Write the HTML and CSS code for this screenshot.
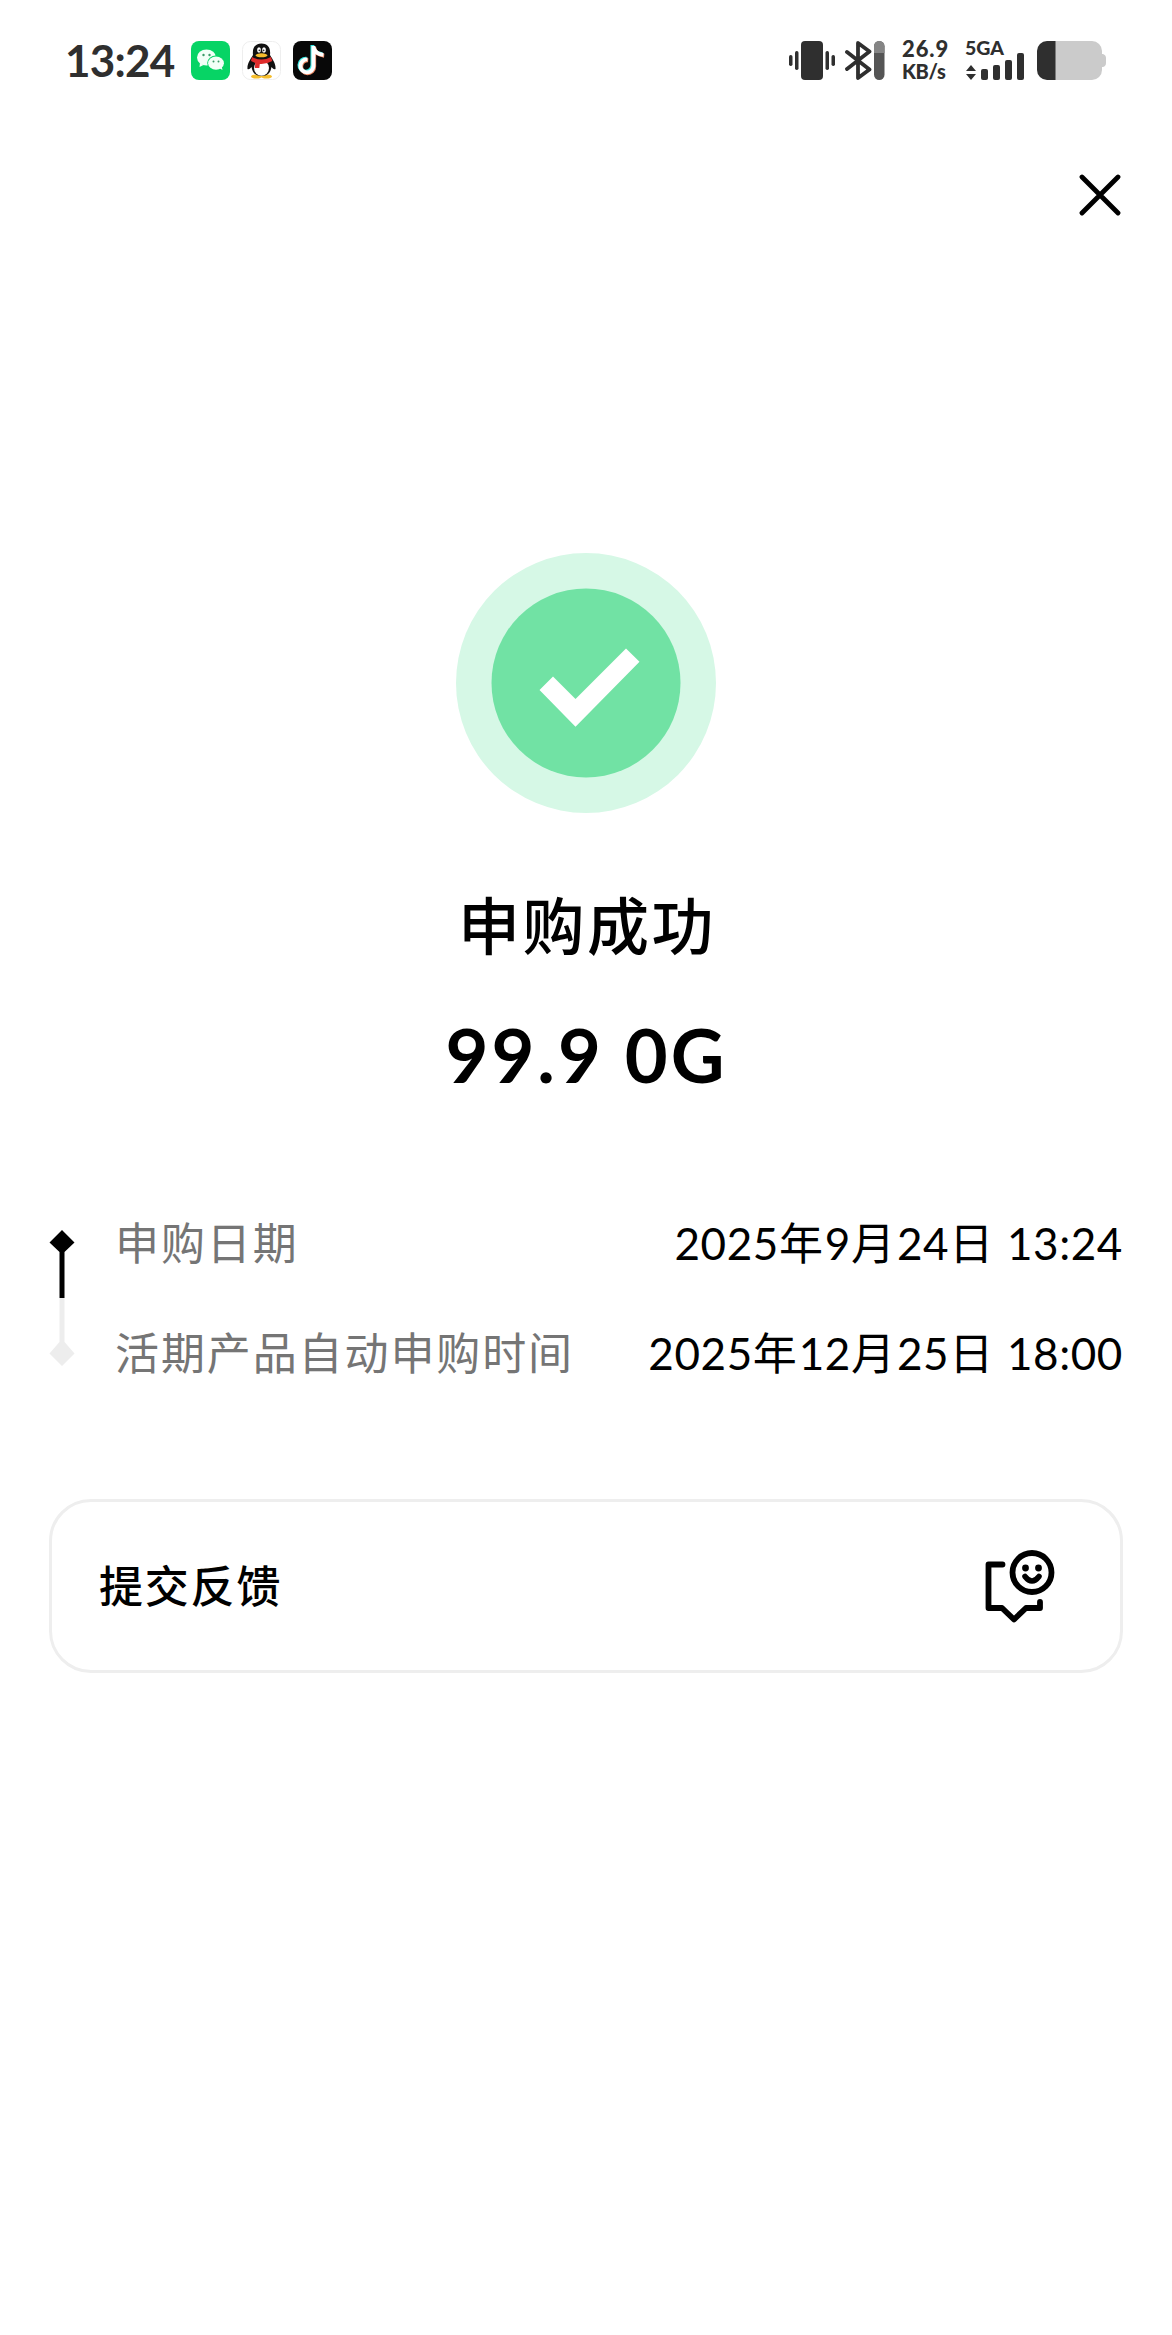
FILE: index.html
```html
<!DOCTYPE html>
<html lang="zh-CN">
<head>
<meta charset="utf-8">
<title>申购成功</title>
<link rel="stylesheet" href="styles.css">
</head>
<body>
<header class="status">
  <div class="status-left">
    <span class="clock">13:24</span>
    <svg class="app" viewBox="0 0 39 39"><rect width="39" height="39" rx="8" fill="#07d465"/><path d="M9 22l-.5 4 4-2z" fill="#f3fff7"/><ellipse cx="15.500" cy="16.500" rx="9.500" ry="8" fill="#f3fff7"/><ellipse cx="25" cy="22" rx="8.800" ry="7.500" fill="#07d465"/><path d="M28 27l3.500 2-.8-3.500z" fill="#f3fff7"/><ellipse cx="25" cy="22.200" rx="7.900" ry="6.600" fill="#f3fff7"/><g fill="#3b9a67"><circle cx="12.500" cy="14" r="1.200"/><circle cx="18.500" cy="14" r="1.200"/><circle cx="22.500" cy="20.500" r="1"/><circle cx="27.500" cy="20.500" r="1"/></g></svg>
    <svg class="app" viewBox="0 0 39 39"><rect x=".5" y=".5" width="38" height="38" rx="8" fill="#fff" stroke="#eee"/><ellipse cx="14.500" cy="35.500" rx="5.500" ry="2" fill="#f5bd2c"/><ellipse cx="24.500" cy="35.500" rx="5.500" ry="2" fill="#f5bd2c"/><path d="M11 14C10 6 14 2.500 19.500 2.500S29 6 28 14c3 5 6 9 5.500 14-1.500 1-3-1-4-2-1 6-4 9-10 9s-9-3-10-9c-1 1-2.500 3-4 2C5 23 8 19 11 14z" fill="#111"/><ellipse cx="19.500" cy="27" rx="7.500" ry="7.800" fill="#fff"/><ellipse cx="17" cy="9" rx="1.900" ry="2.700" fill="#fff"/><ellipse cx="22" cy="9" rx="1.900" ry="2.700" fill="#fff"/><circle cx="17.400" cy="9.300" r=".9"/><circle cx="21.600" cy="9.300" r=".9"/><ellipse cx="19.500" cy="14.300" rx="6" ry="2" fill="#f5bd2c"/><path d="M10 16q9.500 5 19 0l1.300 4q-6 3.500-12.500 3l-.5 4h-4.500l.5-5-4.300-2z" fill="#df2c2c"/></svg>
    <svg class="app" viewBox="0 0 39 39"><rect width="39" height="39" rx="8" fill="#080808"/><g fill="none" stroke-width="3.900"><path d="M20 4.500v20a6.500 6.500 0 1 1-6-6.500M20 5.500c1 5 5 7.500 10 8" stroke="#35e8e2" transform="translate(-.6 -.4)"/><path d="M20 4.500v20a6.500 6.500 0 1 1-6-6.500M20 5.500c1 5 5 7.500 10 8" stroke="#ed8a65" transform="translate(1.200 1.200)"/><path d="M20 4.500v20a6.500 6.500 0 1 1-6-6.500M20 5.500c1 5 5 7.500 10 8" stroke="#fff" transform="translate(.4 .4)"/></g></svg>
  </div>
  <div class="status-right">
    <svg class="vibrate" viewBox="0 0 46 39"><rect x="12" width="22" height="39" rx="4"/><rect x="6" y="10" width="3.500" height="19" rx="1.700"/><rect y="14" width="3.500" height="11" rx="1.700"/><rect x="36.500" y="10" width="3.500" height="19" rx="1.700"/><rect x="42.500" y="14" width="3.500" height="11" rx="1.700"/></svg>
    <svg class="bluetooth" viewBox="0 0 40 39"><path d="M2 11l22.500 17.500L13 37V2l11.500 8.500L2 28" fill="none" stroke="#2f2f2f" stroke-width="3.800" stroke-linecap="round" stroke-linejoin="round"/><rect x="29" width="10.500" height="39" rx="5.200" fill="#555"/><path d="M29 12V5.200a5.200 5.200 0 0 1 10.500 0V12z" fill="#858585"/></svg>
    <div class="speed"><span class="rate">26.9</span><span class="unit">KB/s</span></div>
    <div class="network">
      <span class="carrier">5GA</span>
      <svg class="signal" viewBox="0 0 60 27"><path d="M6 12l5 6H1zM6 27l5-6H1z"/><rect x="16" y="16" width="7" height="11" rx="2"/><rect x="28" y="12" width="7" height="15" rx="2"/><rect x="40" y="7" width="7" height="20" rx="2"/><rect x="52" width="7" height="27" rx="2"/></svg>
    </div>
    <svg class="battery" viewBox="0 0 69 39"><path d="M18 0h37a10 10 0 0 1 10 10v3h1q3 1 3 4v5q0 3-3 4h-1v3a10 10 0 0 1-10 10H18z" fill="#cbcbcb"/><path d="M18.500 0H10A10 10 0 0 0 0 10v19a10 10 0 0 0 10 10h8.500z"/></svg>
  </div>
</header>
<nav class="toolbar">
  <svg class="close" viewBox="0 0 42 42"><path d="M3 3l36 36M39 3L3 39" fill="none" stroke="#000" stroke-width="4.800" stroke-linecap="round"/></svg>
</nav>
<main>
  <section class="result">
    <svg class="success" viewBox="0 0 260 260"><circle cx="130" cy="130" r="130" fill="#d6f8e6"/><circle cx="130" cy="130" r="94.500" fill="#71e2a4"/><path d="M83.500 137l13.500-13.500 22.500 22.500L170 95.500l13.500 13.300-64 65z" fill="#fff"/></svg>
    <h1 class="title">申购成功</h1>
    <p class="amount">99.9 0G</p>
  </section>
  <section class="schedule">
    <svg class="timeline" viewBox="0 0 26 136"><path d="M10.500 68h5v44l10 11.500L13 136 .5 123.500 10.500 112z" fill="#ededed"/><path d="M13 0l12.500 12.500-10 9.500v46h-5V22L.5 12.500z"/></svg>
    <dl class="rows">
      <div class="row"><dt>申购日期</dt><dd>2025<i>年</i>9<i>月</i>24<i>日</i> 13:24</dd></div>
      <div class="row"><dt>活期产品自动申购时间</dt><dd>2025<i>年</i>12<i>月</i>25<i>日</i> 18:00</dd></div>
    </dl>
  </section>
  <section class="feedback">
    <span class="feedback-label">提交反馈</span>
    <svg class="smile" viewBox="0 0 70 73" fill="none" stroke="#000" stroke-width="5.800" stroke-linecap="round" stroke-linejoin="round"><path d="M17.500 14.500H3.500V58H17l12 11.500L41 58h14v-6"/><circle cx="47" cy="22.500" r="19.500"/><path d="M40 26.500q7 9 14 0" stroke-width="5.500"/><g fill="#000" stroke="none"><circle cx="40.500" cy="18" r="3.400"/><circle cx="53.500" cy="18" r="3.400"/></g></svg>
  </section>
</main>
</body>
</html>
```
FILE: styles.css
```css
* { box-sizing: border-box; margin: 0; padding: 0; }
body {
  min-height: 2335px;
  background: #fff;
  color: #000;
  font-family: Lato, "Noto Sans CJK SC", sans-serif;
}
svg { display: block; flex: none; }
.status {
  display: flex;
  justify-content: space-between;
  align-items: center;
  height: 120px;
  padding: 0 66px 0 65px;
  color: #2f2f2f;
  fill: #2f2f2f;
}
.status-left, .status-right { display: flex; align-items: center; }
.clock { width: 126px; font-size: 44px; font-weight: 700; letter-spacing: -.8px; line-height: 60px; white-space: nowrap; }
.app { width: 39px; height: 39px; margin-right: 12px; }
.vibrate { width: 46px; height: 39px; }
.bluetooth { width: 40px; height: 39px; margin-left: 10px; }
.speed {
  display: flex;
  flex-direction: column;
  width: 80px;
  padding-left: 17px;
  font-weight: 900;
  line-height: 23px;
  white-space: nowrap;
}
.rate { font-size: 22px; letter-spacing: .9px; }
.unit { font-size: 20px; letter-spacing: -.3px; }
.network { width: 72px; height: 39px; }
.carrier { display: block; height: 12px; font-size: 19.5px; font-weight: 900; line-height: 14px; }
.signal { width: 60px; height: 27px; }
.battery { width: 69px; height: 39px; }
.toolbar { display: flex; justify-content: flex-end; height: 433px; padding: 54px 51px 0 0; }
.close { width: 42px; height: 42px; }
.result { display: flex; flex-direction: column; align-items: center; }
.success { width: 260px; height: 260px; }
.title { margin-top: 63px; padding-left: 2px; font-size: 62px; font-weight: 500; letter-spacing: 2.5px; line-height: 100px; }
.amount { margin-top: 29px; padding-left: 1px; font-size: 74px; font-weight: 700; letter-spacing: 3px; line-height: 100px; }
.schedule { display: flex; gap: 40px; margin-top: 103px; padding: 0 49px; }
.timeline { width: 26px; height: 136px; margin-top: 22px; }
.rows { flex: 1; }
.row { display: flex; justify-content: space-between; height: 110px; font-size: 44px; line-height: 70px; white-space: nowrap; }
.row dt { color: #757575; letter-spacing: 1.9px; }
.row dd { letter-spacing: .6px; }
.row i { font-style: normal; letter-spacing: 1.9px; }
.feedback {
  display: flex;
  justify-content: space-between;
  align-items: center;
  height: 174px;
  margin: 71px 49px 0;
  padding: 0 65px 0 47px;
  border: 3px solid #eee;
  border-radius: 42px;
  font-size: 44px;
  font-weight: 500;
  letter-spacing: 1.8px;
}
.feedback-label { padding-bottom: 4px; }
.smile { width: 70px; height: 73px; }
```
